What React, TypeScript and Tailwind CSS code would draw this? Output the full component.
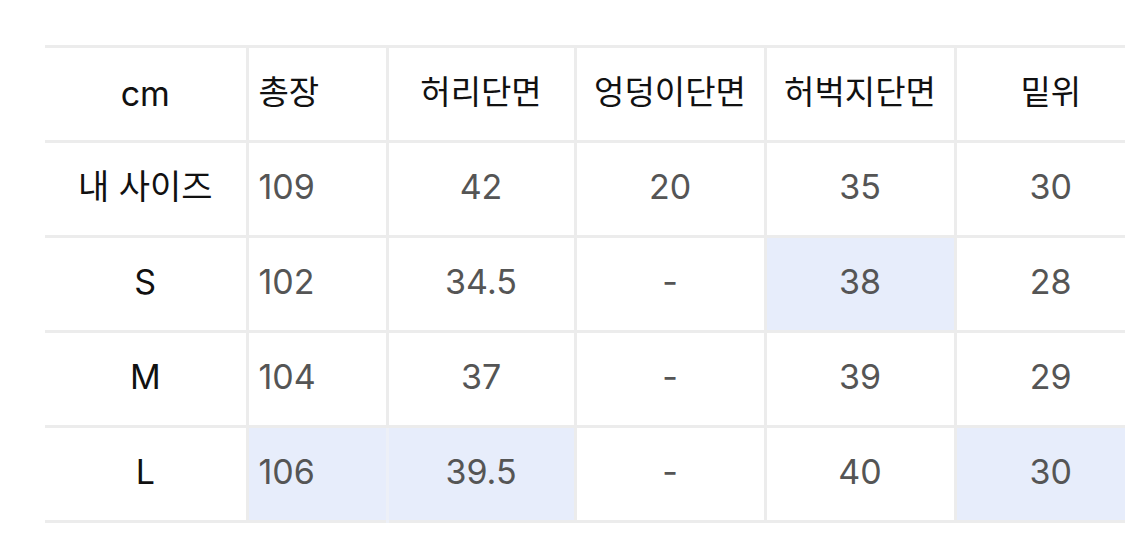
const headers = ["cm", "총장", "허리단면", "엉덩이단면", "허벅지단면", "밑위"];

type Row = { label: string; values: string[]; marked: number[] };

const rows: Row[] = [
  { label: "내 사이즈", values: ["109", "42", "20", "35", "30"], marked: [] },
  { label: "S", values: ["102", "34.5", "-", "38", "28"], marked: [3] },
  { label: "M", values: ["104", "37", "-", "39", "29"], marked: [] },
  { label: "L", values: ["106", "39.5", "-", "40", "30"], marked: [0, 1, 4] },
];

const font = { fontFamily: 'Inter, "Noto Sans CJK KR", sans-serif' };

export default function App() {
  return (
    <div className="h-[555px] w-[1125px] overflow-hidden bg-white pl-[45px] pt-[45px]" style={font}>
      <table className="w-[1100px] table-fixed border-collapse">
        <colgroup>
          <col className="w-[202px]" />
          <col className="w-[140px]" />
          <col className="w-[188px]" />
          <col className="w-[190px]" />
          <col className="w-[190px]" />
          <col className="w-[190px]" />
        </colgroup>
        <thead>
          <tr className="h-[95px] border-t-[3px] border-b-[3px] border-[#ececec]">
            {headers.map((h, i) => (
              <th
                key={h}
                className={
                  "border-l-[3px] border-[#ececec] pb-[2px] font-normal text-[#111] first:border-l-0 " +
                  (i === 0 ? "text-[34px] text-center" : i === 1 ? "text-[33px] pl-[10px] text-left" : "text-[33px] text-center")
                }
              >
                {h}
              </th>
            ))}
          </tr>
        </thead>
        <tbody>
          {rows.map((r, ri) => (
            <tr key={r.label} className="h-[95px] border-b-[3px] border-[#ececec]">
              <td className="pb-[6px] text-center text-[34px] text-[#111]">{r.label}</td>
              {r.values.map((v, i) => {
                const marked = r.marked.includes(i);
                const last = ri === rows.length - 1;
                return (
                  <td
                    key={i}
                    className={
                      "border-l-[3px] border-[#ececec] pb-[6px] text-[34px] text-[#555] " +
                      (i === 0 ? "pl-[10px] text-left " : "text-center ") +
                      (marked ? "bg-[#e7edfb] " : "") +
                      (marked && last && i < 2 ? "border-b-white " : "") +
                      (marked && last && i === 1 ? "border-l-[#edf0f7]" : "")
                    }
                  >
                    {v}
                  </td>
                );
              })}
            </tr>
          ))}
        </tbody>
      </table>
    </div>
  );
}
